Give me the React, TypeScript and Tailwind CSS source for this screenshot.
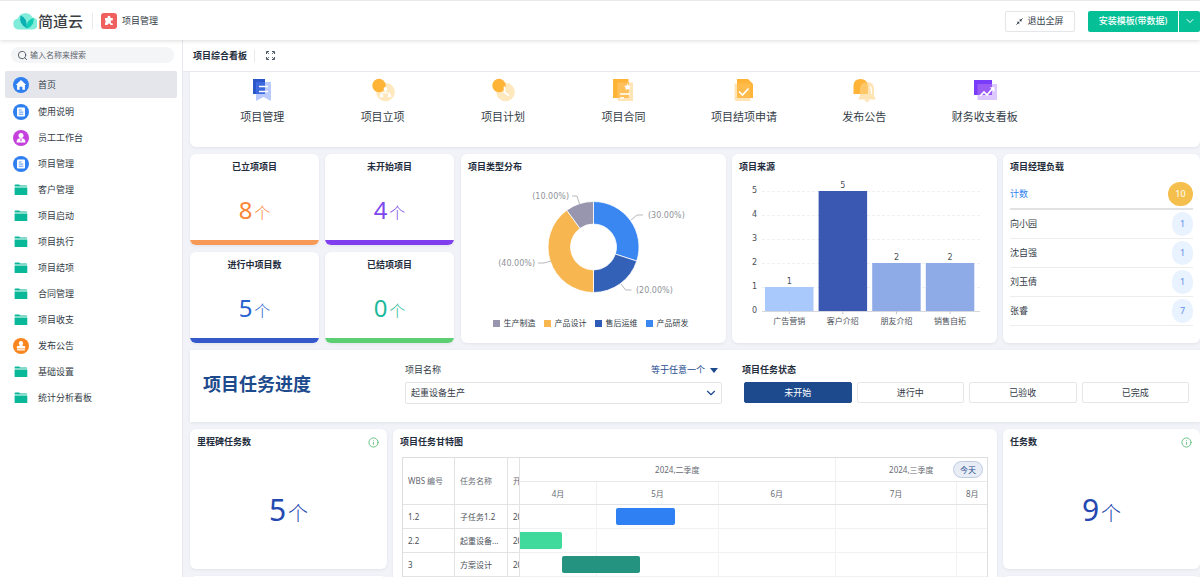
import { useState } from "react";
import type { ReactNode } from "react";
import { ChevronDown, Info, Search } from "lucide-react";

type NavIcon = "home" | "doc" | "user" | "folder" | "stamp";

interface NavItem {
  label: string;
  icon: NavIcon;
}

const navItems: NavItem[] = [
  { label: "首页", icon: "home" },
  { label: "使用说明", icon: "doc" },
  { label: "员工工作台", icon: "user" },
  { label: "项目管理", icon: "doc" },
  { label: "客户管理", icon: "folder" },
  { label: "项目启动", icon: "folder" },
  { label: "项目执行", icon: "folder" },
  { label: "项目结项", icon: "folder" },
  { label: "合同管理", icon: "folder" },
  { label: "项目收支", icon: "folder" },
  { label: "发布公告", icon: "stamp" },
  { label: "基础设置", icon: "folder" },
  { label: "统计分析看板", icon: "folder" },
];

const stats = [
  { title: "已立项项目", value: 8, text: "text-[#fb8533]", bar: "bg-[#f79a57]" },
  { title: "未开始项目", value: 4, text: "text-[#7d48ec]", bar: "bg-[#7f3fee]" },
  { title: "进行中项目数", value: 5, text: "text-[#2761d0]", bar: "bg-[#3559cb]" },
  { title: "已结项项目", value: 0, text: "text-[#1bb99c]", bar: "bg-[#5ccf73]" },
];

const pieSlices = [
  { name: "产品研发", share: 0.3, color: "#3a87f2" },
  { name: "售后运维", share: 0.2, color: "#3461b8" },
  { name: "产品设计", share: 0.4, color: "#f7b64f" },
  { name: "生产制造", share: 0.1, color: "#9796ae" },
];

const pieLegend = [
  { name: "生产制造", color: "bg-[#9796ae]" },
  { name: "产品设计", color: "bg-[#f7b64f]" },
  { name: "售后运维", color: "bg-[#2f5bb8]" },
  { name: "产品研发", color: "bg-[#3a87f2]" },
];

const sources = [
  { name: "广告营销", value: 1, color: "#a9c8fc" },
  { name: "客户介绍", value: 5, color: "#3a57b2" },
  { name: "朋友介绍", value: 2, color: "#8eabe8" },
  { name: "销售自拓", value: 2, color: "#8eabe8" },
];

const managers = [
  { name: "向小园", count: 1 },
  { name: "沈自强", count: 1 },
  { name: "刘玉倩", count: 1 },
  { name: "张睿", count: 7 },
];

const taskStates = ["未开始", "进行中", "已验收", "已完成"];

const tasks = [
  { wbs: "1.2", name: "子任务1.2", start: "20", left: 20.6, width: 12.6, bar: "bg-[#2f80f2] rounded-xs" },
  { wbs: "2.2", name: "起重设备...", start: "20", left: 0, width: 8.9, bar: "bg-[#41da9d] rounded-r-xs" },
  { wbs: "3", name: "方案设计", start: "20", left: 8.9, width: 16.8, bar: "bg-[#24937f] rounded-xs" },
];

function MenuIcon({ icon }: { icon: NavIcon }) {
  if (icon === "folder") {
    return (
      <svg className="w-4 h-4" viewBox="0 0 16 16" fill="#08b899">
        <path d="M1.6 4.600V3.500q0-.900.900-.900h3.500q.500 0 .800.400l.500.600h6q.900 0 .900 1z" />
        <path d="M1.600 5.400h12.700v6.800q0 .900-.900.900H2.500q-.900 0-.900-.900z" />
      </svg>
    );
  }
  if (icon === "home") {
    return (
      <svg className="w-4 h-4" viewBox="0 0 16 16">
        <circle cx="8" cy="8" r="8" fill="#2f7ff0" />
        <path d="M8 3 13.200 8h-1.300v4.800H9.400V9.800H6.600v3H4.100V8H2.800z" fill="#fff" />
      </svg>
    );
  }
  if (icon === "doc") {
    return (
      <svg className="w-4 h-4" viewBox="0 0 16 16">
        <circle cx="8" cy="8" r="8" fill="#2f7ff0" />
        <rect x="4" y="3.400" width="8" height="9.200" rx="1" fill="#fff" />
        <path d="M5.800 6h2.800M5.800 8.100h4.500M5.800 10.200h4.500" stroke="#2f7ff0" strokeWidth="0.800" />
      </svg>
    );
  }
  if (icon === "user") {
    return (
      <svg className="w-4 h-4" viewBox="0 0 16 16">
        <circle cx="8" cy="8" r="8" fill="#c541de" />
        <circle cx="8" cy="5.600" r="2.500" fill="#fff" />
        <path d="M3.600 12.400q0-3.800 3.200-4.200h2.400q3.200.400 3.200 4.200z" fill="#fff" />
        <path d="m8 8.800.8 1.200L8 11.500 7.200 10z" fill="#c541de" />
      </svg>
    );
  }
  return (
    <svg className="w-4 h-4" viewBox="0 0 16 16">
      <circle cx="8" cy="8" r="8" fill="#fb851f" />
      <path d="M8 3a2.200 2.200 0 0 1 1.700 3.500q-.500.700 0 1.400h1.700q.800 0 .800.800v1.800H3.800V8.700q0-.800.800-.800h1.700q.500-.700 0-1.400A2.200 2.200 0 0 1 8 3z" fill="#fff" />
      <path d="M4.100 11h7.800v1.600H4.100z" fill="#fff" opacity=".8" />
    </svg>
  );
}

const shortcuts: { label: string; art: ReactNode }[] = [
  {
    label: "项目管理",
    art: (
      <>
        <path d="M3 1h12v4h-9v11H3z" fill="#2a56c8" />
        <path d="M6 4h15v19l-7.500-4L6 23z" fill="#b9caff" />
        <path d="M6 4h9v12H6z" fill="#3c69e0" />
        <path d="M9 8.500h9M9 13.500h9" stroke="#fff" strokeWidth="1.600" />
      </>
    ),
  },
  {
    label: "项目立项",
    art: (
      <>
        <circle cx="14.500" cy="14" r="9.300" fill="#ffe8bd" />
        <circle cx="8" cy="7.500" r="6.700" fill="#ffb337" />
        <path d="M14.500 10.500v5M10.500 17v-2h8v2" stroke="#fff" strokeWidth="1.100" fill="none" />
        <circle cx="14.500" cy="11" r="1.900" fill="#fff" />
        <path d="M9 16.500h3.200v2.700H9zM17 16.500h3.200v2.700H17z" fill="#fff" />
      </>
    ),
  },
  {
    label: "项目计划",
    art: (
      <>
        <circle cx="14.500" cy="14" r="9.300" fill="#ffe8bd" />
        <circle cx="8" cy="7.500" r="6.700" fill="#ffb337" />
        <path d="M13.500 8.500v6l4.500 3" stroke="#fff" strokeWidth="1.600" fill="none" />
      </>
    ),
  },
  {
    label: "项目合同",
    art: (
      <>
        <path d="M6.500 4.500H22V23H8.500q-2 0-2-2z" fill="#ffe4b5" />
        <path d="M2 1h15.500v19H2z" fill="#ffb337" />
        <path d="M6.500 4.500h11V20h-11z" fill="#ffc05a" />
        <path d="m16.500 5.500 1.100 2.200 2.400.3-1.700 1.700.4 2.400-2.200-1.100-2.100 1.100.4-2.400L13 8l2.400-.3z" fill="#fff" />
        <path d="M9 16h10M9 20h4" stroke="#fff" strokeWidth="1.300" />
      </>
    ),
  },
  {
    label: "项目结项申请",
    art: (
      <>
        <path d="M2.500 5.500h16V23h-14q-2 0-2-2z" fill="#ffe4b5" />
        <path d="M5 1h11l5 5v14H5z" fill="#ffb337" />
        <path d="M5 5.500h13.500V20H5z" fill="#ffbc4d" />
        <path d="m7 13.500 3.500 3.500 6-6.500" stroke="#fff" strokeWidth="1.600" fill="none" />
      </>
    ),
  },
  {
    label: "发布公告",
    art: (
      <>
        <path d="M8 11q0-7 7-7t7 7v7l1.500 2v1.500h-17V20L8 18z" fill="#ffe4b5" />
        <path d="M12.500 21.500h5q-.5 2.500-2.500 2.500t-2.500-2.500z" fill="#ffe4b5" />
        <path d="M1.500 16V8q0-7 7-7t7 7v8z" fill="#ffb337" />
        <path d="M8 16v-5q0-5 5-7 2.500 1.500 2.500 5v7z" fill="#ffc768" />
        <path d="M18 8.500q1.500 1.500 1.500 4.500v3" stroke="#fff" strokeWidth="1.200" fill="none" />
      </>
    ),
  },
  {
    label: "财务收支看板",
    art: (
      <>
        <path d="M4.500 6H24v16H4.500z" fill="#dcc8ff" />
        <path d="M1 2h18v15H1z" fill="#7a3cfb" />
        <path d="M4.500 6H19v11H4.500z" fill="#9a5cf5" />
        <path d="m7 18 4-4 3 3 6-7" stroke="#fff" strokeWidth="1.700" fill="none" />
        <path d="M16.800 9.200h4.700v4.700z" fill="#fff" />
      </>
    ),
  },
];

function Panel({ className = "", children }: { className?: string; children?: ReactNode }) {
  return (
    <section className={`min-w-0 bg-white rounded-md shadow-[0_1px_3px_rgba(40,50,90,0.08)] ${className}`}>
      {children}
    </section>
  );
}

function PanelTitle({ children }: { children: ReactNode }) {
  return <h2 className="h-[26px] px-[7px] leading-[26px] font-bold text-[#1f2d3d]">{children}</h2>;
}

function StatCard({ title, value, text, bar }: (typeof stats)[number]) {
  return (
    <Panel className="flex flex-col overflow-hidden text-center">
      <PanelTitle>{title}</PanelTitle>
      <p className={`flex-1 flex items-center justify-center gap-0.5 leading-none ${text}`}>
        <span className="text-2xl leading-none">{value}</span>
        <span className="mt-1.5 text-base leading-none font-light">个</span>
      </p>
      <div className={`h-[5px] ${bar}`} />
    </Panel>
  );
}

function CountCard({ title, value }: { title: string; value: number }) {
  return (
    <Panel className="flex flex-col">
      <div className="flex items-center justify-between pr-2">
        <PanelTitle>{title}</PanelTitle>
        <Info className="w-[11px] h-[11px] text-[#63c07a]" />
      </div>
      <p className="flex-1 flex items-center justify-center gap-0.5 pb-1 text-[#2449b0]">
        <span className="text-3xl leading-none">{value}</span>
        <span className="mt-2 text-xl leading-none font-light">个</span>
      </p>
    </Panel>
  );
}

const CX = 132.5;
const CY = 67;

function arc(start: number, end: number) {
  const point = (t: number, r: number) =>
    `${CX + r * Math.sin(t * 2 * Math.PI)} ${CY - r * Math.cos(t * 2 * Math.PI)}`;
  return `M${point(start, 45.5)}A45.5 45.5 0 0 1 ${point(end, 45.5)}L${point(end, 23)}A23 23 0 0 0 ${point(start, 23)}Z`;
}

function PieChart() {
  let total = 0;
  return (
    <svg className="block w-full" viewBox="0 0 265 130" role="img" aria-label="项目类型分布">
      {pieSlices.map((s) => {
        const start = total;
        total += s.share;
        return <path key={s.name} d={arc(start, total)} fill={s.color} stroke="#fff" strokeWidth="0.8" />;
      })}
      <g fill="none" stroke="#a5a7ad" strokeWidth="0.8">
        <path d="M111 16h5l2.500 8" />
        <path d="m170 40 6-5h6" />
        <path d="m160 104 4.500 6h6" />
        <path d="m90 81-7 2h-6" />
      </g>
      <g className="text-[8px]" fill="#90939a" fontFamily="DejaVu Sans">
        <text x="108" y="19" textAnchor="end">(10.00%)</text>
        <text x="187" y="38">(30.00%)</text>
        <text x="175" y="113">(20.00%)</text>
        <text x="74" y="86" textAnchor="end">(40.00%)</text>
      </g>
    </svg>
  );
}

function BarChart() {
  const base = 131;
  const unit = 24;
  return (
    <svg className="block w-full" viewBox="0 0 265 150" role="img" aria-label="项目来源">
      <g className="text-[8px]" fill="#4b5058">
        {[0, 1, 2, 3, 4, 5].map((n) => (
          <g key={n}>
            <path
              d={`M30 ${base - n * unit + 0.5}H248`}
              stroke={n === 0 ? "#d5d7dc" : "#eff0f3"}
              strokeDasharray={n === 0 ? undefined : "3 2"}
            />
            <text x="25" y={base - n * unit + 2} textAnchor="end" fontFamily="DejaVu Sans">{n}</text>
          </g>
        ))}
        {sources.map((s, i) => {
          const x = 33 + i * 53.6;
          const top = base - s.value * unit;
          return (
            <g key={s.name} textAnchor="middle">
              <rect x={x} y={top} width="48.5" height={s.value * unit} fill={s.color} />
              <path d={`M${x + 24.25} ${base}v3`} stroke="#c3c6cc" />
              <text x={x + 24.25} y={top - 3} fontFamily="DejaVu Sans">{s.value}</text>
              <text x={x + 24.25} y={base + 13}>{s.name}</text>
            </g>
          );
        })}
      </g>
    </svg>
  );
}

function ManagerLoad() {
  return (
    <Panel>
      <PanelTitle>项目经理负载</PanelTitle>
      <div className="px-[7px]">
        <table className="w-full border-collapse">
          <thead>
            <tr className="h-[29px] border-b-2 border-[#e1e2e4] text-[#2f7ff0]">
              <th className="p-0 text-left font-normal">计数</th>
              <td className="p-0">
                <span className="ml-auto flex items-center justify-center w-[25px] h-6 rounded-full bg-[#f4bf4c] text-white">10</span>
              </td>
            </tr>
          </thead>
          <tbody>
            {managers.map((m) => (
              <tr key={m.name} className="h-[29px] border-b border-[#eceded]">
                <th className="p-0 text-left font-normal">{m.name}</th>
                <td className="p-0">
                  <span className="ml-auto flex items-center justify-center w-[21px] h-6 rounded-full bg-[#e9f2ff] text-[#5f8ff0]">
                    {m.count}
                  </span>
                </td>
              </tr>
            ))}
          </tbody>
        </table>
      </div>
    </Panel>
  );
}

function FilterBar() {
  const [active, setActive] = useState("未开始");

  return (
    <section className="flex pl-[13px] pr-[11px] pt-3 pb-[18px] bg-white shadow-[0_1px_3px_rgba(40,50,90,0.08)]">
      <h1 className="w-[202px] self-center pt-0.5 text-lg leading-6 font-bold text-[#1c4a8c]">项目任务进度</h1>
      <div className="flex-[317] min-w-0">
        <div className="flex items-center justify-between h-4">
          <label htmlFor="project">项目名称</label>
          <span className="flex items-center gap-1 pr-1 text-[#1c4a8c]">
            <select aria-label="匹配方式" className="appearance-none">
              <option>等于任意一个</option>
            </select>
            <svg className="w-2 h-[5px]" viewBox="0 0 8 5" fill="currentColor">
              <path d="M0 0h8L4 5z" />
            </svg>
          </span>
        </div>
        <div className="relative mt-1">
          <select id="project" className="block w-full h-[22px] px-[5px] appearance-none border border-[#e3e4e8] rounded-xs bg-white">
            <option>起重设备生产</option>
          </select>
          <ChevronDown className="absolute right-1 top-1 w-[14px] h-[14px] text-[#1c4a8c] pointer-events-none" />
        </div>
      </div>
      <div className="flex-[447] min-w-0 ml-5">
        <h2 className="h-4 leading-4 font-bold text-[#1f2d3d]">项目任务状态</h2>
        <div className="flex gap-[5px] mt-1 pl-0.5">
          {taskStates.map((state) => (
            <button
              key={state}
              aria-pressed={state === active}
              onClick={() => setActive(state)}
              className={`flex-1 h-[21px] border rounded-xs ${
                state === active ? "bg-[#1c4a8c] border-[#1c4a8c] text-white" : "bg-white border-[#e6e7ea]"
              }`}
            >
              {state}
            </button>
          ))}
        </div>
      </div>
    </section>
  );
}

function Gantt() {
  const cell = "p-0 pl-[5px] text-left font-normal border-b border-r border-[#e2e3e5] whitespace-nowrap overflow-hidden";
  return (
    <Panel className="row-span-2">
      <PanelTitle>项目任务甘特图</PanelTitle>
      <div className="flex mt-0.5 mx-[9px] border border-[#dddee0] text-[8px] text-[#666b72]">
        <table className="w-[117px] shrink-0 table-fixed border-separate border-spacing-0">
          <thead>
            <tr className="h-[47px]">
              <th className={`w-[52px] ${cell}`}>WBS 编号</th>
              <th className={`w-[53px] ${cell}`}>任务名称</th>
              <th className={cell}>开</th>
            </tr>
          </thead>
          <tbody className="text-[#4b5058]">
            {tasks.map((t) => (
              <tr key={t.wbs} className="h-6">
                <td className={cell}>{t.wbs}</td>
                <td className={cell}>{t.name}</td>
                <td className={cell}>{t.start}</td>
              </tr>
            ))}
          </tbody>
        </table>
        <div className="relative flex-1 min-w-0 text-center">
          <div className="flex h-6 leading-6 border-b border-[#e9eaec]">
            <div className="flex-[316] border-r border-[#eff0f2]">2024,二季度</div>
            <div className="flex-[152]">2024,三季度</div>
          </div>
          <div className="flex h-[23px] leading-[23px] border-b border-[#e2e3e5]">
            <div className="flex-[77] border-r border-[#eff0f2]">4月</div>
            <div className="flex-[122] border-r border-[#eff0f2]">5月</div>
            <div className="flex-[117] border-r border-[#eff0f2]">6月</div>
            <div className="flex-[122] border-r border-[#eff0f2]">7月</div>
            <div className="flex-[30]">8月</div>
          </div>
          {tasks.map((t) => (
            <div key={t.wbs} className="relative flex h-6 border-b border-[#f0f1f3]">
              <div className="flex-[77] border-r border-[#f2f3f5]" />
              <div className="flex-[122] border-r border-[#f2f3f5]" />
              <div className="flex-[117] border-r border-[#f2f3f5]" />
              <div className="flex-[122] border-r border-[#f2f3f5]" />
              <div className="flex-[30]" />
              <div
                className={`absolute top-[3px] h-[17px] ${t.bar}`}
                style={{ left: `${t.left}%`, width: `${t.width}%` }}
              />
            </div>
          ))}
          <button className="absolute top-[3px] right-1 w-[30px] h-[17px] border border-[#bcc9df] rounded-full bg-[#e8edf5] text-[#1c4a8c]">
            今天
          </button>
        </div>
      </div>
    </Panel>
  );
}

function Header() {
  return (
    <header className="relative z-10 flex items-center h-10 pt-px pl-[13px] border-t border-[#e9e9eb] bg-white shadow-[0_1px_4px_rgba(0,0,0,0.14)]">
      <svg className="w-6 h-[18px]" viewBox="0 0 24 18">
        <path d="M5.500 17.500A5.500 5.500 0 0 1 4.800 6.600 8 8 0 0 1 19.500 5.500a6 6 0 0 1-.500 12z" fill="#80ecd9" />
        <path d="M14 16.500Q5.500 12 7.500 3.500q6.500 1.500 6.500 13z" fill="#0bb0b4" />
        <path d="M14 16.500q-1.500-8 6.500-10.500 1.500 7.500-6.500 10.500z" fill="#10cdb4" />
      </svg>
      <span className="ml-px text-[15px] font-medium text-[#3b3f44]">简道云</span>
      <span className="w-px h-4 ml-[9px] mr-2 bg-[#e8e9eb]" />
      <svg className="w-4 h-4" viewBox="0 0 16 16">
        <rect width="16" height="16" rx="3" fill="#ef605f" />
        <path d="M4 5h2.600a1.500 1.500 0 1 1 2.700 0h2.500v2.400a1.500 1.500 0 1 0 0 2.800V12H9.500a1.500 1.500 0 1 0-3 0H4V9.800a1.500 1.500 0 0 0 0-2.600z" fill="#fff" />
      </svg>
      <span className="ml-[5px]">项目管理</span>
      <button className="flex items-center justify-center gap-1 w-[70px] h-[21px] ml-auto mr-[13px] border border-[#e5e6e9] rounded-xs">
        <svg className="w-[7px] h-[7px]" viewBox="0 0 8 8" fill="#1f2d3d">
          <path d="M4.300.9v2.800h2.800zM3.700 7.100V4.300H.900z" />
          <path d="m4.800 3.200 2.700-2.700M3.200 4.800.500 7.500" stroke="#1f2d3d" strokeWidth="1" />
        </svg>
        退出全屏
      </button>
      <button className="w-[90px] h-[21px] rounded-l-xs bg-[#05c097] font-medium text-white">安装模板(带数据)</button>
      <button
        aria-label="更多安装选项"
        className="flex items-center justify-center w-[21px] h-[21px] ml-px rounded-r-xs bg-[#05c097] text-white"
      >
        <ChevronDown className="w-3 h-3" />
      </button>
    </header>
  );
}

function Sidebar() {
  return (
    <aside className="w-[183px] shrink-0 pt-[7px] px-[5px] border-r border-[#e8e9ee]">
      <label className="flex items-center gap-0.5 h-4 ml-1.5 mr-[3px] px-1.5 rounded-full bg-[#f4f5f7]">
        <Search className="w-[11px] h-[11px] text-[#4b5563]" />
        <input
          aria-label="搜索"
          placeholder="输入名称来搜索"
          className="flex-1 min-w-0 text-[8px] placeholder:text-[#5d636d] outline-none"
        />
      </label>
      <nav className="mt-2">
        {navItems.map((item, i) => (
          <a
            key={item.label}
            href="#"
            className={`flex items-center gap-[9px] pl-2 rounded-xs ${i === 0 ? "h-[27px] mb-px bg-[#e4e6eb]" : "h-[26px]"}`}
          >
            <MenuIcon icon={item.icon} />
            {item.label}
          </a>
        ))}
      </nav>
    </aside>
  );
}

export default function App() {
  return (
    <div className="flex flex-col h-screen overflow-hidden bg-white font-['Noto_Sans','Noto_Sans_CJK_SC',sans-serif] text-[9px] leading-3 text-[#343c47]">
      <Header />
      <div className="flex flex-1 min-h-0">
        <Sidebar />
        <main className="flex flex-col flex-1 min-w-0">
          <div className="flex items-center h-8 shrink-0 pl-2.5 border-b border-[#e8e9ee]">
            <h1 className="font-bold text-[#1f2d3d]">项目综合看板</h1>
            <span className="w-px h-3 ml-[7px] mr-[11px] bg-[#e8e9eb]" />
            <button aria-label="全屏">
              <svg className="w-[9px] h-[9px]" viewBox="0 0 9 9" fill="none" stroke="#4b5563">
                <path d="M.5 3V.5H3M6 .5h2.500V3M8.500 6v2.500H6M3 8.500H.5V6" />
                <path d="m1 1 2 2M8 1 6 3M8 8 6 6M1 8l2-2" strokeWidth="0.800" />
              </svg>
            </button>
          </div>

          <div className="flex-1 min-h-0 overflow-hidden flex flex-col gap-[7px] pl-[7px] bg-[#f2f3f8]">
            <nav className="grid grid-cols-7 shrink-0 h-[75px] pl-3 pr-[155px] pt-1.5 bg-white rounded-b-md shadow-[0_1px_3px_rgba(40,50,90,0.08)]">
              {shortcuts.map((s) => (
                <a key={s.label} href="#" className="flex flex-col items-center gap-[7px] text-[11px] leading-4">
                  <svg className="w-6 h-6" viewBox="0 0 24 24">{s.art}</svg>
                  {s.label}
                </a>
              ))}
            </nav>

            <div className="grid shrink-0 grid-cols-[265fr_265fr_265fr_197fr] gap-1.5">
              <div className="grid grid-cols-2 auto-rows-[91px] gap-x-1.5 gap-y-[7px] pr-px">
                {stats.map((s) => (
                  <StatCard key={s.title} {...s} />
                ))}
              </div>
              <Panel>
                <PanelTitle>项目类型分布</PanelTitle>
                <PieChart />
                <ul className="flex justify-center gap-2 pt-[7px] pr-1.5 text-[8px]">
                  {pieLegend.map((l) => (
                    <li key={l.name} className="flex items-center gap-1 whitespace-nowrap">
                      <span className={`w-[7px] h-[7px] ${l.color}`} />
                      {l.name}
                    </li>
                  ))}
                </ul>
              </Panel>
              <Panel>
                <PanelTitle>项目来源</PanelTitle>
                <BarChart />
              </Panel>
              <ManagerLoad />
            </div>

            <FilterBar />

            <div className="grid shrink-0 grid-cols-[197fr_604fr_197fr] grid-rows-[140px_80px] gap-x-1.5 gap-y-[7px]">
              <CountCard title="里程碑任务数" value={5} />
              <Gantt />
              <CountCard title="任务数" value={9} />
              <Panel />
              <Panel />
            </div>
          </div>
        </main>
      </div>
    </div>
  );
}
